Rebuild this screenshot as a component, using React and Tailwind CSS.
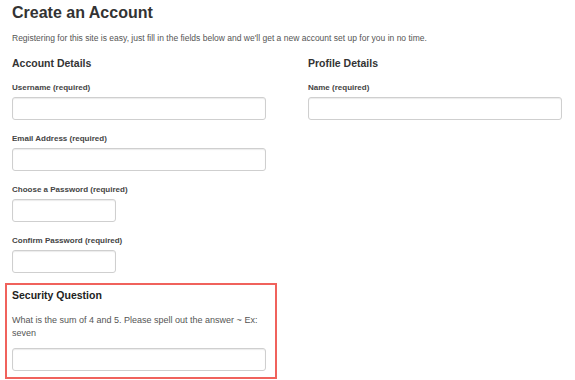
export default function App() {
  return (
    <div className="min-h-screen bg-white font-['Liberation_Sans',Arial,sans-serif] text-[#333]">
      <div className="pl-3 pt-[2px]">
        <h1 className="text-[16px] font-bold leading-[22px] text-[#333]">Create an Account</h1>
        <p className="mt-[8px] text-[8.5px] leading-[12px] text-[#555]">
          Registering for this site is easy, just fill in the fields below and we'll get a new account set up for you in no time.
        </p>

        <div className="mt-[12px] flex">
          <div className="w-[254px]">
            <h2 className="text-[10.5px] font-bold leading-[14px]">Account Details</h2>
            <Field label="Username (required)" className="mt-[13px]" />
            <Field label="Email Address (required)" className="mt-[14px]" />
            <Field label="Choose a Password (required)" className="mt-[14px]" short />
            <Field label="Confirm Password (required)" className="mt-[14px]" short />
          </div>

          <div className="ml-[42px] w-[254px]">
            <h2 className="text-[10.5px] font-bold leading-[14px]">Profile Details</h2>
            <Field label="Name (required)" className="mt-[13px]" />
          </div>
        </div>
      </div>

      <div className="ml-[5px] mt-[10px] w-[272px] border-2 border-[#f0625c] px-[5px] pb-[6px] pt-[3px]">
        <h3 className="text-[10.5px] font-bold leading-[14px] text-[#222]">Security Question</h3>
        <p className="mt-[12px] text-[9px] leading-[13px] text-[#555]">
          What is the sum of 4 and 5. Please spell out the answer ~ Ex: seven
        </p>
        <input
          type="text"
          className="mt-[8px] block h-[23px] w-[254px] rounded-[3px] border border-[#cfcfcf] bg-white shadow-[inset_0_1px_1px_rgba(0,0,0,0.08)]"
        />
      </div>
    </div>
  );
}

function Field({ label, className, short }) {
  return (
    <div className={className}>
      <label className="block text-[8px] font-bold leading-[10px] text-[#444]">{label}</label>
      <input
        type="text"
        className={`mt-[4px] block h-[23px] ${short ? "w-[104px]" : "w-[254px]"} rounded-[3px] border border-[#cfcfcf] bg-white shadow-[inset_0_1px_1px_rgba(0,0,0,0.08)]`}
      />
    </div>
  );
}
